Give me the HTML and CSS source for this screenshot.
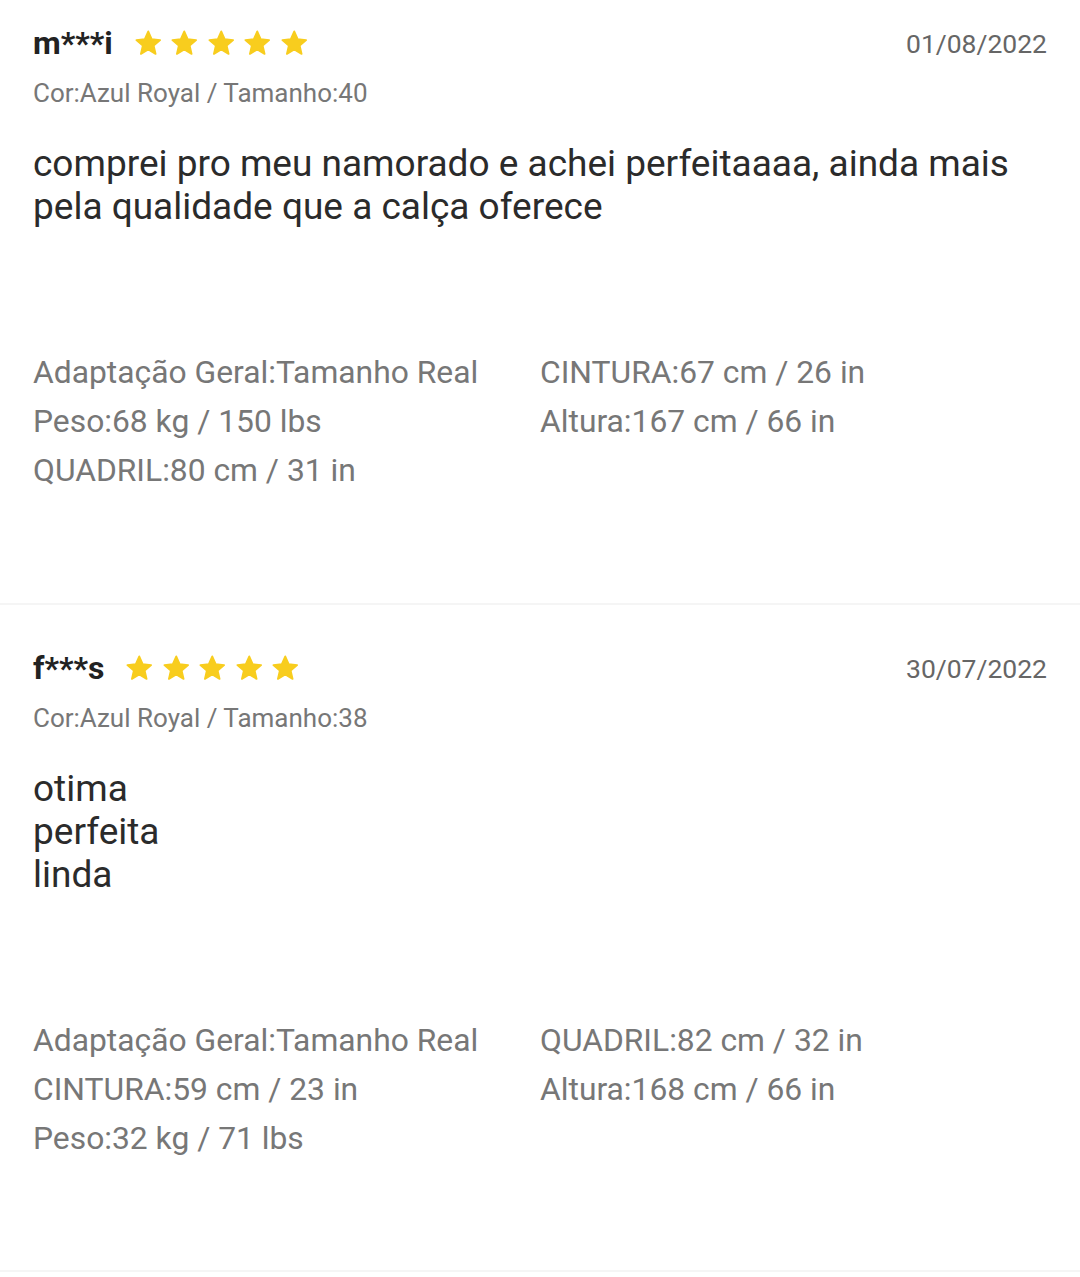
FILE: index.html
```
<!DOCTYPE html>
<html lang="pt-BR">
<head>
    <meta charset="UTF-8">
    <meta name="viewport" content="width=device-width, initial-scale=1.0">
    <title>Avaliações</title>
    <link rel="stylesheet" href="styles.css">
</head>
<body>
    <div class="review-list">
        <div class="review">
            <div class="review-head">
                <div class="review-user">
                    <span class="user-name">m***i</span>
                    <div class="stars">
                        <svg class="star" viewBox="0 0 24 24"><polygon points="12,2 14.9,8.6 22,9.3 16.6,14 18.2,21 12,17.3 5.8,21 7.4,14 2,9.3 9.1,8.6"/></svg>
                        <svg class="star" viewBox="0 0 24 24"><polygon points="12,2 14.9,8.6 22,9.3 16.6,14 18.2,21 12,17.3 5.8,21 7.4,14 2,9.3 9.1,8.6"/></svg>
                        <svg class="star" viewBox="0 0 24 24"><polygon points="12,2 14.9,8.6 22,9.3 16.6,14 18.2,21 12,17.3 5.8,21 7.4,14 2,9.3 9.1,8.6"/></svg>
                        <svg class="star" viewBox="0 0 24 24"><polygon points="12,2 14.9,8.6 22,9.3 16.6,14 18.2,21 12,17.3 5.8,21 7.4,14 2,9.3 9.1,8.6"/></svg>
                        <svg class="star" viewBox="0 0 24 24"><polygon points="12,2 14.9,8.6 22,9.3 16.6,14 18.2,21 12,17.3 5.8,21 7.4,14 2,9.3 9.1,8.6"/></svg>
                    </div>
                </div>
                <span class="review-date">01/08/2022</span>
            </div>
            <div class="review-sku">Cor:Azul Royal / Tamanho:40</div>
            <div class="review-text">comprei pro meu namorado e achei perfeitaaaa, ainda mais pela qualidade que a calça oferece</div>
            <div class="review-fit">
                <div>Adaptação Geral:Tamanho Real</div>
                <div>CINTURA:67 cm / 26 in</div>
                <div>Peso:68 kg / 150 lbs</div>
                <div>Altura:167 cm / 66 in</div>
                <div>QUADRIL:80 cm / 31 in</div>
            </div>
        </div>

        <div class="review">
            <div class="review-head">
                <div class="review-user">
                    <span class="user-name">f***s</span>
                    <div class="stars">
                        <svg class="star" viewBox="0 0 24 24"><polygon points="12,2 14.9,8.6 22,9.3 16.6,14 18.2,21 12,17.3 5.8,21 7.4,14 2,9.3 9.1,8.6"/></svg>
                        <svg class="star" viewBox="0 0 24 24"><polygon points="12,2 14.9,8.6 22,9.3 16.6,14 18.2,21 12,17.3 5.8,21 7.4,14 2,9.3 9.1,8.6"/></svg>
                        <svg class="star" viewBox="0 0 24 24"><polygon points="12,2 14.9,8.6 22,9.3 16.6,14 18.2,21 12,17.3 5.8,21 7.4,14 2,9.3 9.1,8.6"/></svg>
                        <svg class="star" viewBox="0 0 24 24"><polygon points="12,2 14.9,8.6 22,9.3 16.6,14 18.2,21 12,17.3 5.8,21 7.4,14 2,9.3 9.1,8.6"/></svg>
                        <svg class="star" viewBox="0 0 24 24"><polygon points="12,2 14.9,8.6 22,9.3 16.6,14 18.2,21 12,17.3 5.8,21 7.4,14 2,9.3 9.1,8.6"/></svg>
                    </div>
                </div>
                <span class="review-date">30/07/2022</span>
            </div>
            <div class="review-sku">Cor:Azul Royal / Tamanho:38</div>
            <div class="review-text">otima<br>perfeita<br>linda</div>
            <div class="review-fit">
                <div>Adaptação Geral:Tamanho Real</div>
                <div>QUADRIL:82 cm / 32 in</div>
                <div>CINTURA:59 cm / 23 in</div>
                <div>Altura:168 cm / 66 in</div>
                <div>Peso:32 kg / 71 lbs</div>
            </div>
        </div>
    </div>
</body>
</html>
```

FILE: styles.css
```
body {
    margin: 0;
    padding: 0;
    font-family: Roboto, 'Noto Sans', sans-serif;
    background: #fff;
    color: #222;
}

.review {
    padding: 43px 33px 107px;
    border-bottom: 2px solid #f5f5f5;
}

.review:first-child {
    padding-top: 23px;
}

.review:first-child .review-fit {
    padding-bottom: 1px;
}

.review-head {
    display: flex;
    justify-content: space-between;
    align-items: center;
    height: 40px;
}

.review-user {
    display: flex;
    align-items: center;
}

.user-name {
    font-size: 32px;
    font-weight: bold;
    color: #222;
}

.stars {
    display: flex;
    gap: 8px;
    margin-left: 21px;
}

.star {
    width: 28.5px;
    height: 28.5px;
    fill: #f8cd1e;
    stroke: #f8cd1e;
    stroke-width: 1.5;
    stroke-linejoin: round;
}

.review-date {
    font-size: 26.5px;
    color: #666;
}

.review-sku {
    margin-top: 14px;
    font-size: 26px;
    line-height: 32px;
    color: #777;
}

.review-text {
    margin-top: 33px;
    font-size: 37px;
    line-height: 43px;
    color: #2b2b2b;
}

.review-fit {
    display: grid;
    grid-template-columns: 507px 1fr;
    margin-top: 120px;
    font-size: 31.8px;
    line-height: 49px;
    color: #777;
}
```
